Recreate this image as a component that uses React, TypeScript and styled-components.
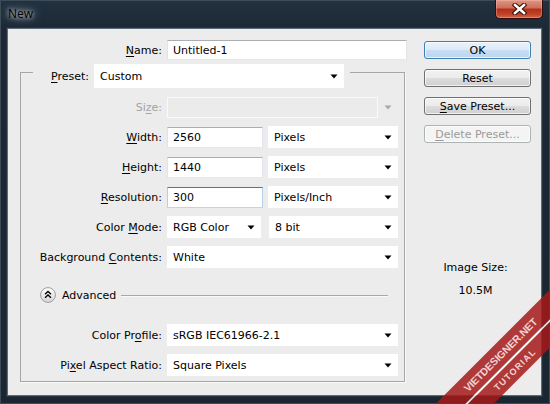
import React from "react";
import styled, { createGlobalStyle } from "styled-components";

const GlobalStyle = createGlobalStyle`
  html, body {
    margin: 0;
    padding: 0;
    background: #1c2835;
  }
  body {
    font-family: "DejaVu Sans", Tahoma, sans-serif;
    font-size: 11px;
    color: #000;
  }
`;

const Arrow = ({ disabled }: { disabled?: boolean }) => (
  <svg width="8" height="5" viewBox="0 0 8 5">
    <polygon points="0.5,0.5 7.5,0.5 4,4.5" fill={disabled ? "#a8a8a8" : "#000"} />
  </svg>
);

const CloseGlyph = () => (
  <svg width="15" height="12" viewBox="0 0 15 12">
    <path d="M3 2 L12 10 M12 2 L3 10" stroke="#3a0d06" strokeWidth="4.6" strokeLinecap="square" />
    <path d="M3 2 L12 10 M12 2 L3 10" stroke="#fff" strokeWidth="2.6" strokeLinecap="square" />
  </svg>
);

const CollapseIcon = () => (
  <svg width="16" height="16" viewBox="0 0 16 16">
    <defs>
      <linearGradient id="adv" x1="0" y1="0" x2="0" y2="1">
        <stop offset="0" stopColor="#ffffff" />
        <stop offset="1" stopColor="#d6d6d6" />
      </linearGradient>
    </defs>
    <circle cx="8" cy="8" r="7.4" fill="url(#adv)" stroke="#9c9c9c" strokeWidth="1" />
    <path d="M5 7.2 L8 4.4 L11 7.2 M5 10.8 L8 8 L11 10.8" fill="none" stroke="#000" strokeWidth="1.3" />
  </svg>
);

const Dialog = () => {
  return (
    <Window>
      <TitleBar>
        <Title>New</Title>
        <CloseButton>
          <CloseGlyph />
        </CloseButton>
      </TitleBar>
      <Client>
        <FormColumn>
          <FieldRow $labelWidth={142} $fieldWidth={240} $rowHeight={20}>
            <Label>
              <Key>N</Key>ame:
            </Label>
            <TextBox $height={20}>Untitled-1</TextBox>
          </FieldRow>

          <GroupBox>
            <GroupHeader>
              <Label>
                <Key>P</Key>reset:
              </Label>
              <Combo $width={250} $height={24}>
                <span>Custom</span>
                <Arrow />
              </Combo>
            </GroupHeader>

            <GroupBody>
              <FieldRow>
                <Label $disabled>
                  Si<Key>z</Key>e:
                </Label>
                <DisabledCombo>
                  <DisabledInner />
                  <Arrow disabled />
                </DisabledCombo>
              </FieldRow>
              <FieldRow>
                <Label>
                  <Key>W</Key>idth:
                </Label>
                <Pair $first={96} $gap={5}>
                  <TextBox>2560</TextBox>
                  <Combo>
                    <span>Pixels</span>
                    <Arrow />
                  </Combo>
                </Pair>
              </FieldRow>
              <FieldRow>
                <Label>
                  <Key>H</Key>eight:
                </Label>
                <Pair $first={96} $gap={5}>
                  <TextBox>1440</TextBox>
                  <Combo>
                    <span>Pixels</span>
                    <Arrow />
                  </Combo>
                </Pair>
              </FieldRow>
              <FieldRow>
                <Label>
                  <Key>R</Key>esolution:
                </Label>
                <Pair $first={96} $gap={5}>
                  <TextBox $focused>300</TextBox>
                  <Combo>
                    <span>Pixels/Inch</span>
                    <Arrow />
                  </Combo>
                </Pair>
              </FieldRow>
              <FieldRow>
                <Label>
                  Color <Key>M</Key>ode:
                </Label>
                <Pair $first={94} $gap={8}>
                  <Combo>
                    <span>RGB Color</span>
                    <Arrow />
                  </Combo>
                  <Combo>
                    <span>8 bit</span>
                    <Arrow />
                  </Combo>
                </Pair>
              </FieldRow>
              <FieldRow>
                <Label>
                  Background <Key>C</Key>ontents:
                </Label>
                <Combo>
                  <span>White</span>
                  <Arrow />
                </Combo>
              </FieldRow>
            </GroupBody>

            <AdvancedRow>
              <CollapseIcon />
              <span>Advanced</span>
              <Rule />
            </AdvancedRow>

            <GroupBody $top={21}>
              <FieldRow>
                <Label>
                  Color Pr<Key>o</Key>file:
                </Label>
                <Combo>
                  <span>sRGB IEC61966-2.1</span>
                  <Arrow />
                </Combo>
              </FieldRow>
              <FieldRow>
                <Label>
                  Pi<Key>x</Key>el Aspect Ratio:
                </Label>
                <Combo>
                  <span>Square Pixels</span>
                  <Arrow />
                </Combo>
              </FieldRow>
            </GroupBody>
          </GroupBox>
        </FormColumn>

        <ButtonColumn>
          <Button $variant="default">OK</Button>
          <Button>Reset</Button>
          <Button>
            <Key>S</Key>ave Preset...
          </Button>
          <Button $variant="disabled">
            <Key>D</Key>elete Preset...
          </Button>
          <ImageInfo>
            <span>Image Size:</span>
            <span>10.5M</span>
          </ImageInfo>
        </ButtonColumn>
      </Client>

      <Watermark>
        <Band>
          <Stripe $height={21}>
            <StripeText $size={10.5} $spacing={-0.2}>VIETDESIGNER.NET</StripeText>
          </Stripe>
          <Separator />
          <Stripe $height={18}>
            <StripeText $size={9} $spacing={1.2}>TUTORIAL</StripeText>
          </Stripe>
        </Band>
      </Watermark>
    </Window>
  );
};

const Window = styled.div`
  position: relative;
  width: 550px;
  height: 404px;
  display: flex;
  flex-direction: column;
  overflow: hidden;
  background: linear-gradient(#23323f 0px, #1c2835 30px, #1b2633 100%);
  box-shadow: inset 0 0 0 1px #3e4c59;
`;

const TitleBar = styled.div`
  height: 29px;
  flex-shrink: 0;
  display: flex;
  align-items: flex-start;
  justify-content: space-between;
  padding: 0 7px 0 8px;
`;

const Title = styled.div`
  font-family: "Open Sans", "Noto Sans", sans-serif;
  font-size: 12px;
  line-height: 28px;
  color: #000;
  text-shadow: 0 0 4px rgba(235, 242, 248, 0.9), 0 0 9px rgba(210, 222, 232, 0.7),
    0 0 14px rgba(190, 205, 220, 0.5);
`;

const CloseButton = styled.div`
  width: 48px;
  height: 19px;
  box-sizing: border-box;
  display: flex;
  align-items: center;
  justify-content: center;
  border: 1px solid #2c0f0a;
  border-top: none;
  border-radius: 0 0 5px 5px;
  background: linear-gradient(#dc9786 0%, #cf705a 42%, #b3301b 52%, #c24228 80%, #d5684c 100%);
  box-shadow: inset 0 0 0 1px rgba(255, 200, 185, 0.35);
`;

const Client = styled.div`
  flex: 1;
  margin: 0 9px 9px 8px;
  box-sizing: border-box;
  padding: 11px 10px 0 12px;
  display: flex;
  gap: 19px;
  background: #ececec;
  box-shadow: 0 0 0 1px #5b6a78, 0 0 0 2px #25333f;
`;

const FormColumn = styled.div`
  width: 385px;
  display: flex;
  flex-direction: column;
`;

const FieldRow = styled.div<{ $labelWidth?: number; $fieldWidth?: number; $rowHeight?: number }>`
  display: grid;
  grid-template-columns: ${(p) => p.$labelWidth ?? 141}px ${(p) => p.$fieldWidth ?? 231}px;
  column-gap: 5px;
  align-items: center;
  height: ${(p) => p.$rowHeight ?? 22}px;
`;

const Label = styled.div<{ $disabled?: boolean }>`
  text-align: right;
  white-space: nowrap;
  color: ${(p) => (p.$disabled ? "#a3a3a3" : "#000")};
`;

const Key = styled.u`
  text-underline-offset: 2px;
`;

const TextBox = styled.div<{ $height?: number; $focused?: boolean }>`
  height: ${(p) => p.$height ?? 21}px;
  box-sizing: border-box;
  display: flex;
  align-items: center;
  padding-left: 5px;
  background: #fff;
  border: 1px solid ${(p) => (p.$focused ? "#b5cfe7" : "#e2e3ea")};
  border-top-color: ${(p) => (p.$focused ? "#3d7bad" : "#abadb3")};
  border-bottom-color: ${(p) => (p.$focused ? "#b7d9ed" : "#e3e9ef")};
`;

const Combo = styled.div<{ $width?: number; $height?: number }>`
  ${(p) => (p.$width ? `width: ${p.$width}px;` : "")}
  height: ${(p) => p.$height ?? 22}px;
  box-sizing: border-box;
  display: flex;
  align-items: center;
  justify-content: space-between;
  padding: 0 6px 0 6px;
  background: #fff;
  white-space: nowrap;
`;

const DisabledCombo = styled.div`
  height: 21px;
  display: flex;
  align-items: center;
  gap: 6px;
  padding-right: 6px;
`;

const DisabledInner = styled.div`
  flex: 1;
  height: 21px;
  box-sizing: border-box;
  border: 1px solid #f9f9f9;
  background: #ebebeb;
`;

const Pair = styled.div<{ $first: number; $gap: number }>`
  display: grid;
  grid-template-columns: ${(p) => p.$first}px 1fr;
  column-gap: ${(p) => p.$gap}px;
  align-items: center;
`;

const GroupBox = styled.div`
  margin-top: 12px;
  border: 1px solid #a6a6a6;
  box-shadow: 1px 1px 0 #fafafa;
  padding: 0 6px 5px 0;
  display: flex;
  flex-direction: column;
`;

const GroupHeader = styled.div`
  align-self: flex-start;
  margin: -9px 0 0 12px;
  padding: 0 6px 0 18px;
  height: 24px;
  display: flex;
  align-items: center;
  gap: 5px;
  background: #ececec;
`;

const GroupBody = styled.div<{ $top?: number }>`
  margin-top: ${(p) => p.$top ?? 8}px;
  display: flex;
  flex-direction: column;
  gap: 8px;
`;

const AdvancedRow = styled.div`
  margin-top: 19px;
  height: 16px;
  display: flex;
  align-items: center;
  gap: 6px;
  padding-left: 19px;
  padding-right: 10px;
`;

const Rule = styled.div`
  flex: 1;
  height: 1px;
  margin-left: -1px;
  background: #a8a8a8;
  box-shadow: 0 1px 0 #fafafa;
`;

const ButtonColumn = styled.div`
  width: 107px;
  padding-top: 1px;
  display: flex;
  flex-direction: column;
  gap: 10px;
`;

const Button = styled.div<{ $variant?: "default" | "disabled" }>`
  height: 18px;
  box-sizing: border-box;
  display: flex;
  align-items: center;
  justify-content: center;
  border-radius: 3px;
  border: 1px solid
    ${(p) => (p.$variant === "default" ? "#3c7fb1" : p.$variant === "disabled" ? "#adb2b5" : "#707070")};
  color: ${(p) => (p.$variant === "disabled" ? "#9a9a9a" : "#000")};
  background: ${(p) =>
    p.$variant === "default"
      ? "linear-gradient(#eaf3fc 0%, #dce9f8 50%, #c9ddf3 51%, #bcd5f0 100%)"
      : p.$variant === "disabled"
      ? "#f4f4f4"
      : "linear-gradient(#f2f2f2 0%, #ebebeb 50%, #dddddd 51%, #cfcfcf 100%)"};
  box-shadow: inset 0 0 0 1px rgba(255, 255, 255, 0.7);
`;

const ImageInfo = styled.div`
  margin-top: 108px;
  display: flex;
  flex-direction: column;
  align-items: center;
  gap: 9px;
  line-height: 14px;
  margin-left: -4px;
`;

const Watermark = styled.div`
  position: absolute;
  inset: 0;
  pointer-events: none;
  overflow: hidden;
`;

const Band = styled.div`
  position: absolute;
  left: 357px;
  top: 341px;
  width: 300px;
  height: 41px;
  transform: rotate(-45deg);
  display: flex;
  flex-direction: column;
`;

const Stripe = styled.div<{ $height: number }>`
  height: ${(p) => p.$height}px;
  display: flex;
  align-items: center;
  justify-content: center;
  background: rgba(165, 25, 25, 0.85);
`;

const Separator = styled.div`
  height: 2px;
  background: rgba(255, 255, 255, 0.85);
`;

const StripeText = styled.span<{ $size: number; $spacing: number }>`
  font-family: "Liberation Sans", Arial, sans-serif;
  font-weight: bold;
  font-size: ${(p) => p.$size}px;
  letter-spacing: ${(p) => p.$spacing}px;
  color: rgba(255, 232, 232, 0.88);
`;

export default function App() {
  return (
    <>
      <GlobalStyle />
      <Dialog />
    </>
  );
}
